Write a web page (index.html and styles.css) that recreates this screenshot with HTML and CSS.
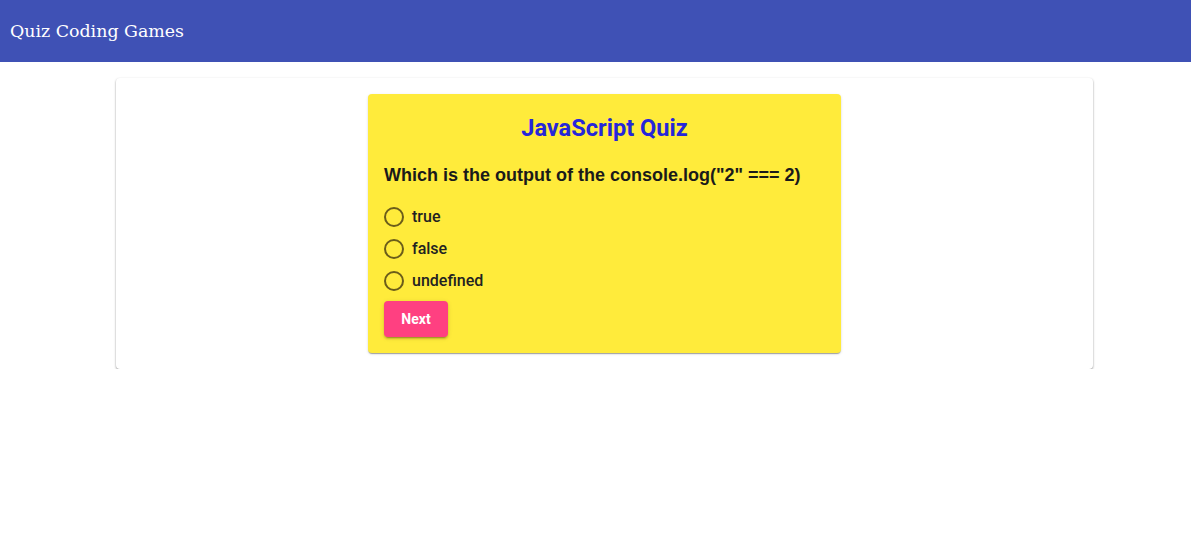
FILE: index.html
```html
<!DOCTYPE html>
<html>
<head>
<meta charset="utf-8">
<link rel="stylesheet" href="styles.css">
</head>
<body>
<header class="appbar">
  <h1 class="brand">Quiz Coding Games</h1>
</header>
<main class="page">
  <section class="paper">
    <div class="quiz">
      <h2 class="quiz-title">JavaScript Quiz</h2>
      <p class="question">Which is the output of the console.log("2" === 2)</p>
      <div class="options">
        <label class="option"><span class="radio"></span><span>true</span></label>
        <label class="option"><span class="radio"></span><span>false</span></label>
        <label class="option"><span class="radio"></span><span>undefined</span></label>
      </div>
      <button class="next">Next</button>
    </div>
  </section>
</main>
</body>
</html>
```
FILE: styles.css
```css
* { box-sizing: border-box; }
body {
  margin: 0;
  background: #fff;
  font-family: Roboto, "Liberation Sans", sans-serif;
}
.appbar {
  height: 62px;
  background: #3f51b5;
  display: flex;
  align-items: center;
  padding-left: 10px;
}
.brand {
  margin: 0;
  color: #fff;
  font-family: "DejaVu Serif", "Liberation Serif", serif;
  font-weight: normal;
  font-size: 17.4px;
}
.page {
  padding: 16px 98px 0 116px;
}
.paper {
  background: #fff;
  border-radius: 4px;
  box-shadow: 0 1px 2px 0 rgba(0,0,0,0.35), 0 1px 3px 0 rgba(0,0,0,0.1);
  padding: 16px 0;
  display: flex;
  justify-content: center;
}
.quiz {
  width: 473px;
  background: #ffeb3b;
  border-radius: 4px;
  box-shadow: 0 2px 1px -1px rgba(0,0,0,0.2), 0 1px 1px 0 rgba(0,0,0,0.14), 0 1px 3px 0 rgba(0,0,0,0.12);
  padding: 20px 16px 16px;
}
.quiz-title {
  margin: 0;
  text-align: center;
  color: #2626d9;
  font-family: Roboto, sans-serif;
  font-weight: 700;
  font-size: 23.6px;
  line-height: 28px;
}
.question {
  margin: 22px 0 21px;
  font-family: "Liberation Sans", Arial, sans-serif;
  font-weight: 700;
  font-size: 18px;
  line-height: 22px;
  color: #1a1a1a;
}
.options {
  display: flex;
  flex-direction: column;
  gap: 12px;
}
.option {
  display: flex;
  align-items: center;
  gap: 8px;
  font-family: Roboto, sans-serif;
  font-weight: 500;
  font-size: 16px;
  line-height: 20px;
  color: #222;
}
.radio {
  width: 20px;
  height: 20px;
  border: 2px solid #6b5d1a;
  border-radius: 50%;
}
.next {
  margin-top: 10px;
  width: 64px;
  height: 36px;
  border: none;
  border-radius: 4px;
  background: #ff4081;
  color: #fff;
  font-family: Roboto, sans-serif;
  font-weight: 700;
  font-size: 14px;
  box-shadow: 0 3px 1px -2px rgba(0,0,0,0.2), 0 2px 2px 0 rgba(0,0,0,0.14), 0 1px 5px 0 rgba(0,0,0,0.12);
}
```
